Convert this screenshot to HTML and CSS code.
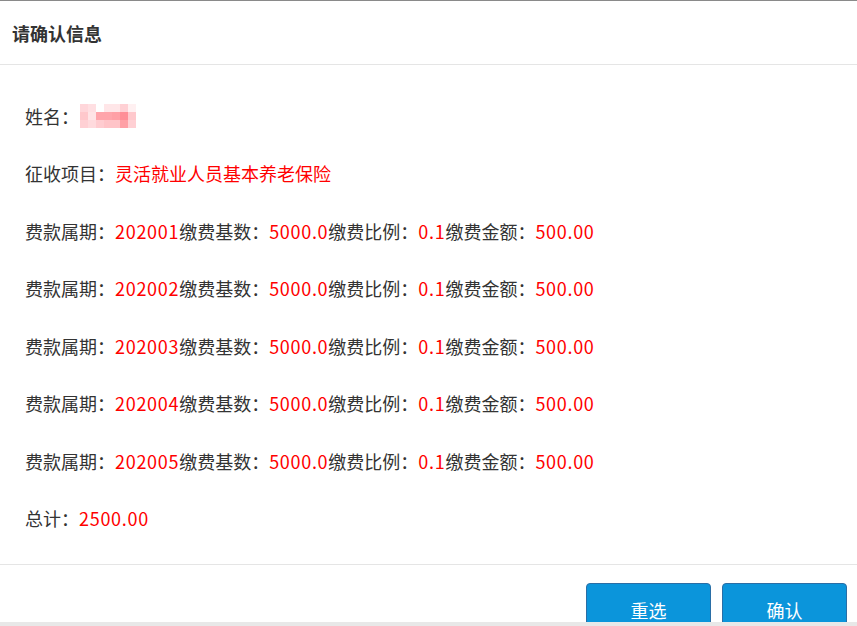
FILE: index.html
```html
<!DOCTYPE html>
<html lang="zh-CN">
<head>
<meta charset="utf-8">
<title>请确认信息</title>
<link rel="stylesheet" href="styles.css">
</head>
<body>
<div class="dialog">
  <div class="dlg-header"><span class="dlg-title">请确认信息</span></div>
  <div class="dlg-body">
    <div class="row"><span class="label">姓名：</span><span class="masked">
      <span class="mrow"><i class="c11"></i><i class="c12"></i><i class="c13"></i><i class="c14"></i><i class="c15"></i><i class="c16"></i><i class="c17"></i></span>
      <span class="mrow"><i class="c21"></i><i class="c22"></i><i class="c23"></i><i class="c24"></i><i class="c25"></i><i class="c26"></i><i class="c27"></i></span>
      <span class="mrow"><i class="c31"></i><i class="c32"></i><i class="c33"></i><i class="c34"></i><i class="c35"></i><i class="c36"></i><i class="c37"></i></span>
    </span></div>
    <div class="row"><span class="label">征收项目：</span><span class="val">灵活就业人员基本养老保险</span></div>
    <div class="row">费款属期：<span class="val num">202001</span>缴费基数：<span class="val num">5000.0</span>缴费比例：<span class="val num">0.1</span>缴费金额：<span class="val num">500.00</span></div>
    <div class="row">费款属期：<span class="val num">202002</span>缴费基数：<span class="val num">5000.0</span>缴费比例：<span class="val num">0.1</span>缴费金额：<span class="val num">500.00</span></div>
    <div class="row">费款属期：<span class="val num">202003</span>缴费基数：<span class="val num">5000.0</span>缴费比例：<span class="val num">0.1</span>缴费金额：<span class="val num">500.00</span></div>
    <div class="row">费款属期：<span class="val num">202004</span>缴费基数：<span class="val num">5000.0</span>缴费比例：<span class="val num">0.1</span>缴费金额：<span class="val num">500.00</span></div>
    <div class="row">费款属期：<span class="val num">202005</span>缴费基数：<span class="val num">5000.0</span>缴费比例：<span class="val num">0.1</span>缴费金额：<span class="val num">500.00</span></div>
    <div class="row"><span class="label">总计：</span><span class="val num">2500.00</span></div>
  </div>
  <div class="dlg-footer">
    <button class="btn">重选</button>
    <button class="btn">确认</button>
  </div>
</div>
</body>
</html>
```
FILE: styles.css
```css
html, body {
  margin: 0;
  padding: 0;
  background: #e8e8e8;
}
body {
  font-family: "Noto Sans CJK SC", "Microsoft YaHei", sans-serif;
  color: #333;
}
.dialog {
  background: #fff;
  border-top: 1px solid #8a8a8a;
  overflow: hidden;
  box-sizing: border-box;
  height: 622px;
}
.dlg-header {
  border-bottom: 1px solid #e5e5e5;
  display: flex;
  align-items: center;
  padding-left: 12px;
  box-sizing: border-box;
  height: 64px;
}
.dlg-title {
  font-size: 18px;
  font-weight: bold;
  color: #333;
  line-height: 1;
}
.dlg-body {
  padding: 22px 0 17px 25px;
  height: 500px;
  box-sizing: border-box;
  border-bottom: 1px solid #e5e5e5;
}
.row {
  height: 57.5px;
  display: flex;
  align-items: center;
  font-size: 18px;
  white-space: nowrap;
}
.val {
  color: #ff0000;
}
.num {
  letter-spacing: 0.7px;
}
.masked {
  display: flex;
  flex-direction: column;
  margin-left: 1px;
}
.mrow {
  display: flex;
}
.mrow i {
  display: block;
  width: 8px;
  height: 8px;
}
.c11 { background: #ffd6da; } .c12 { background: #ffdfe2; } .c13 { background: #ffffff; } .c14 { background: #ffe6e8; } .c15 { background: #ffe6e8; } .c16 { background: #ffd0d4; } .c17 { background: #fff0f1; }
.c21 { background: #ffc8cc; } .c22 { background: #ffe4e6; } .c23 { background: #ffa5ab; } .c24 { background: #ffa5ab; } .c25 { background: #ffa0a6; } .c26 { background: #ff8f97; } .c27 { background: #ffc8cc; }
.c31 { background: #ffd0d4; } .c32 { background: #ffdadd; } .c33 { background: #ffccd0; } .c34 { background: #ffc4c8; } .c35 { background: #ffc4c8; } .c36 { background: #ffa0a6; } .c37 { background: #ffd0d4; }
.dlg-footer {
  display: flex;
  justify-content: flex-end;
  gap: 11px;
  padding: 18px 10px 0 0;
}
.btn {
  width: 125px;
  height: 54px;
  border: 1px solid #2a6ea6;
  border-radius: 4px;
  background: #0b95db;
  color: #fff;
  font-family: "Noto Sans CJK SC", "Microsoft YaHei", sans-serif;
  font-size: 18px;
  padding: 0;
  line-height: 52px;
}
```
